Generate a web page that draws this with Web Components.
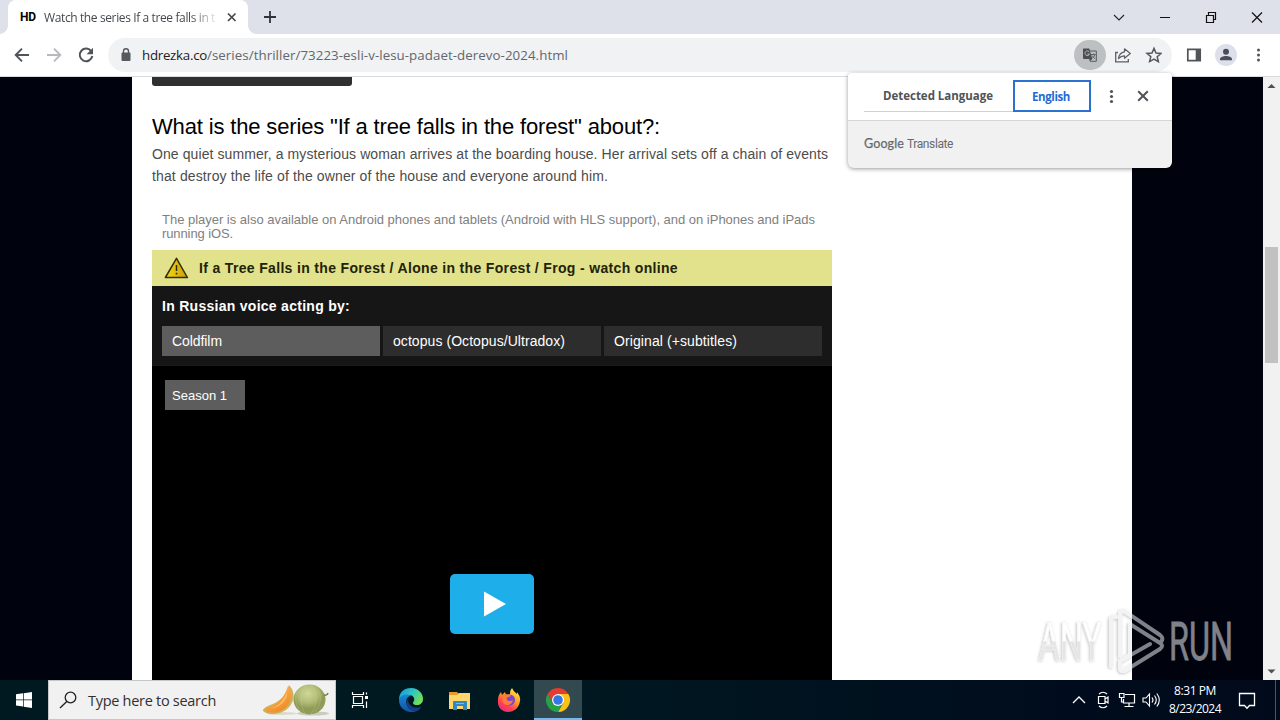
<!DOCTYPE html>
<html lang="en">
<head>
<meta charset="utf-8">
<title>Watch the series If a tree falls in the forest</title>
<style>
html,body{margin:0;height:100%;overflow:hidden}
body{font-family:"Liberation Sans",Arial,sans-serif}
</style>
</head>
<body>
<desktop-screen></desktop-screen>
<script>
const define=(name,css,html)=>{
  const t=document.createElement('template');
  t.innerHTML=`<style>*{box-sizing:border-box}svg{display:block;flex:none}${css}</style>${html}`;
  customElements.define(name,class extends HTMLElement{
    constructor(){super();this.attachShadow({mode:'open'}).append(t.content.cloneNode(true));}
  });
};

/* One line of text whose tracking is adjusted to fill the given width. */
customElements.define('fit-text',class extends HTMLElement{
  constructor(){
    super();
    this.attachShadow({mode:'open'}).innerHTML='<style>:host{display:block;white-space:pre;width:max-content}span{display:inline-block}</style><span><slot></slot></span>';
  }
  connectedCallback(){
    const s=this.shadowRoot.querySelector('span'),w=+this.getAttribute('w');
    const n=this.textContent.length;
    const natural=s.getBoundingClientRect().width;
    if(w&&n&&natural){s.style.letterSpacing=((w-natural)/n)+'px';this.style.width=w+'px';}
  }
});

define('browser-tab',`
:host{display:flex;width:240px;height:34px;background:#fff;border-radius:8px 8px 0 0;align-items:center;padding:0 8px 0 12px;font:12px "Open Sans","Noto Sans",sans-serif;color:#45494d;position:relative}
:host::before,:host::after{content:"";position:absolute;bottom:0;width:8px;height:8px}
:host::before{left:-8px;background:radial-gradient(circle at 0 0,transparent 7.5px,#fff 8px)}
:host::after{right:-8px;background:radial-gradient(circle at 100% 0,transparent 7.5px,#fff 8px)}
.ico{font:bold 12px Roboto,sans-serif;color:#000;width:24px}
.t{width:172px;-webkit-mask-image:linear-gradient(90deg,#000 146px,transparent 175px);mask-image:linear-gradient(90deg,#000 146px,transparent 175px)}
svg{margin-left:7px}`,
`<div class="ico"><fit-text w="16">HD</fit-text></div><div class="t"><fit-text w="171">Watch the series If a tree falls in t</fit-text></div>
<svg width="16" height="16" viewBox="0 0 16 16"><path d="M5 4.500l7.500 7.500M12.500 4.500L5 12" stroke="#45494d" stroke-width="1.700"/></svg>`);

define('tab-strip',`
:host{display:flex;height:34px;background:#dee1e9;padding-left:8px;align-items:center}
.plus{margin-left:14px}.win{display:flex;margin-left:auto}`,
`<browser-tab></browser-tab>
<svg class="plus" width="16" height="16" viewBox="0 0 16 16"><path d="M8 2v12M2 8h12" stroke="#303338" stroke-width="1.800"/></svg>
<div class="win">
<svg width="46" height="28" viewBox="0 0 46 28"><path d="M18 12l5 5 5-5" fill="none" stroke="#222" stroke-width="1.100"/></svg>
<svg width="46" height="28" viewBox="0 0 46 28"><path d="M18 14.500h10" stroke="#111"/></svg>
<svg width="46" height="28" viewBox="0 0 46 28"><path d="M18.500 12.500h7v7h-7zM20.500 12v-2.500h7v7H26" fill="none" stroke="#111" stroke-width="1.200"/></svg>
<svg width="46" height="28" viewBox="0 0 46 28"><path d="M18 9.500l10 10M28 9.500l-10 10" stroke="#111" stroke-width="1.200"/></svg>
</div>`);

define('tool-bar',`
:host{display:flex;height:43px;background:#fff;border-bottom:1px solid #d9dbdd;align-items:center;padding-left:12px}
.nav{display:flex;gap:12px;width:96px}
.omni{display:flex;align-items:center;width:1064px;height:34px;border-radius:17px;background:#f0f2f4;padding:0 10px 0 11px;font:13.3px "Open Sans","Noto Sans",sans-serif;color:#62676d}
.host{color:#1d2024;margin-left:9px}
.tr{margin-left:auto;width:32px;height:30px;border-radius:16px;background:#bcc0c1;display:flex;align-items:center;justify-content:center}
.icons{display:flex;gap:12px;margin-left:8px;align-items:center}
.right{display:flex;align-items:center;margin-left:12px;width:84px}`,
`<div class="nav">
<svg width="20" height="20" viewBox="0 0 20 20"><path d="M17 10H4M10 3.700L3.700 10l6.300 6.300" fill="none" stroke="#505459" stroke-width="1.900"/></svg>
<svg width="20" height="20" viewBox="0 0 20 20"><path d="M3 10h13M10 3.700l6.300 6.300-6.300 6.300" fill="none" stroke="#b7b9bc" stroke-width="1.900"/></svg>
<svg width="20" height="20" viewBox="0 0 20 20"><path d="M15.400 6.500A6.300 6.300 0 1 0 16.300 11" fill="none" stroke="#505459" stroke-width="2"/><path d="M17 2.800v6.400h-6.400z" fill="#505459"/></svg>
</div>
<div class="omni">
<svg width="14" height="16" viewBox="0 0 14 16"><rect x="2.500" y="5.500" width="9" height="8.500" rx="1" fill="#55595e"/><path d="M4.500 6V4.200a2.500 2.500 0 0 1 5 0V6" fill="none" stroke="#55595e" stroke-width="1.400"/></svg>
<fit-text class="host" w="65">hdrezka.co</fit-text><fit-text w="361">/series/thriller/73223-esli-v-lesu-padaet-derevo-2024.html</fit-text>
<div class="tr"><svg width="16" height="16" viewBox="0 0 16 16"><path d="M7 4h7.300v10.300H8.200" fill="none" stroke="#55595c"/><path d="M1 1.500h6.300l3 10.500H2a1 1 0 0 1-1-1z" fill="#4b4f52"/><path d="M7.300 5.100A2.300 2.300 0 1 0 7.500 7H5.400" fill="none" stroke="#bcc0c1" stroke-width=".9"/><path d="M9 7.500h4.600M11.400 6.500v1M12.800 7.800c-.4 1.500-1.400 2.600-2.500 3.500M10 8.500l3 3.400" fill="none" stroke="#55595c" stroke-width=".9"/><path d="M7.300 12h3l-2.600 2.600z" fill="#4b4f52"/></svg></div>
<div class="icons">
<svg width="18" height="18" viewBox="0 0 18 18"><path d="M4 6.500H1.700v9.300h12.600V13" fill="none" stroke="#5b6066" stroke-width="1.300"/><path d="M10.500 2.800L16.300 7.500l-5.800 4.800V9.800C8 9.700 6.300 10.500 4.500 12.600c.4-3.500 2.500-6.300 6-6.800z" fill="none" stroke="#5b6066" stroke-width="1.200" stroke-linejoin="round"/></svg>
<svg width="18" height="18" viewBox="0 0 18 18"><path d="M10 2.400l2 4.600 5 .45-3.800 3.300 1.150 4.900L10 13l-4.350 2.550 1.150-4.900L3 7.450 8 7z" fill="none" stroke="#55595e" stroke-width="1.500" stroke-linejoin="miter"/></svg>
</div></div>
<div class="right">
<svg width="20" height="20" viewBox="0 0 20 20"><path d="M3.800 4.300h12.400v11.400H3.800z" fill="none" stroke="#505459" stroke-width="1.700"/><path d="M11.700 4h4.700v12h-4.700z" fill="#505459"/></svg>
<svg style="margin-left:11px" width="22" height="22" viewBox="0 0 22 22"><circle cx="11" cy="11" r="11" fill="#dde0ea"/><circle cx="11" cy="7.800" r="3" fill="#494e5c"/><path d="M5 16.300v-1.200c0-2 3.500-3.100 6-3.100s6 1.100 6 3.100v1.200z" fill="#494e5c"/></svg>
<svg style="margin-left:12px" width="18" height="18" viewBox="0 0 18 18"><g fill="#505459"><circle cx="9.500" cy="4" r="1.500"/><circle cx="9.500" cy="9" r="1.500"/><circle cx="9.500" cy="14" r="1.500"/></g></svg>
</div>`);

define('translate-popup',`
:host{display:block;width:324px;height:95px;background:#f1f1f1;border-radius:4px 4px 6px 6px;box-shadow:0 1px 4px rgba(0,0,0,.4);overflow:hidden}
.top{display:flex;height:48px;background:#fff;border-bottom:1px solid #d6d6d6;padding-left:16px;font:bold 11.5px "Open Sans","Noto Sans",sans-serif}
.a{width:149px;height:39px;border-bottom:1px solid #d0d0d0;display:flex;align-items:center;color:#505357;padding:7px 0 0 19px}
.b{width:78px;height:32px;margin-top:7px;border:2px solid #2972d2;display:flex;align-items:center;justify-content:center;color:#1f6bd5;padding:0 2px 0 0}
.ft{display:flex;padding:15px 0 0 16px;color:#666a6e;font-size:12px;line-height:16px}
.g{font-family:Lato,sans-serif;-webkit-text-stroke:.25px #666a6e;margin-right:3px;font-size:12.500px}
.t{font-family:Roboto,sans-serif}
svg{margin-top:14px}`,
`<div class="top"><div class="a"><fit-text w="110">Detected Language</fit-text></div><div class="b"><fit-text w="38">English</fit-text></div>
<svg style="margin-left:12px" width="18" height="18" viewBox="0 0 18 18"><g fill="#505459"><circle cx="8.500" cy="4.500" r="1.600"/><circle cx="8.500" cy="9.500" r="1.600"/><circle cx="8.500" cy="14.500" r="1.600"/></g></svg>
<svg style="margin-left:13px" width="18" height="18" viewBox="0 0 18 18"><path d="M4.200 4.200l9.600 9.600M13.800 4.200l-9.600 9.600" stroke="#505459" stroke-width="2"/></svg></div>
<div class="ft"><fit-text class="g" w="40">Google</fit-text><fit-text class="t" w="46">Translate</fit-text></div>`);

define('voice-option',`
:host{display:flex;align-items:center;height:30px;width:218px;padding-left:10px;background:#2d2d2d;color:#fff;font-size:14px;box-sizing:border-box}
:host([active]){background:#5d5d5d}`,`<slot></slot>`);

define('play-button',`
:host{display:flex;width:84px;height:60px;border-radius:5px;background:#1eaeea;align-items:center;justify-content:center}`,
`<svg width="84" height="60" viewBox="0 0 84 60"><path d="M34 17.500v25L56 30z" fill="#fff"/></svg>`);

define('video-player',`
:host{display:flex;flex-direction:column;width:680px;height:430px;background:#000}
.warn{display:flex;height:36px;flex:none;background:#e1e28b;align-items:center;padding-left:12px;font-weight:bold;font-size:14px;color:#222208;gap:10px}
.voices{height:80px;flex:none;background:#161616;padding:0 10px;color:#fff;border-bottom:1px solid #1a1a1a}
.voices h3{margin:0;font-size:14px;height:40px;line-height:40px}
.row{display:flex;gap:3px}
.season{width:80px;height:30px;margin:14px 0 0 13px;padding-left:7px;font-size:13px}
play-button{margin:164px 0 0 298px}`,
`<div class="warn"><svg width="25" height="24" viewBox="0 0 25 24"><defs><linearGradient id="w" x2="1"><stop offset="0" stop-color="#f4da16"/><stop offset="1" stop-color="#c99d0b"/></linearGradient></defs><path d="M12.500 2.400L23.400 21.500H1.400z" fill="url(#w)" stroke="#352d0b" stroke-width="1.500" stroke-linejoin="round"/><path d="M12.500 9v6M12.500 16.700v1.800" stroke="#30280a" stroke-width="1.500"/></svg><fit-text w="479">If a Tree Falls in the Forest / Alone in the Forest / Frog - watch online</fit-text></div>
<div class="voices"><h3><fit-text w="188">In Russian voice acting by:</fit-text></h3><div class="row">
<voice-option active><fit-text w="50">Coldfilm</fit-text></voice-option><voice-option><fit-text w="172">octopus (Octopus/Ultradox)</fit-text></voice-option><voice-option><fit-text w="123">Original (+subtitles)</fit-text></voice-option></div></div>
<voice-option class="season" active><fit-text w="55">Season 1</fit-text></voice-option>
<play-button></play-button>`);

define('series-page',`
:host{display:block;width:1000px;height:603px;background:#fff;padding:0 20px;overflow:hidden;box-sizing:border-box}
.bar{width:200px;height:9px;background:#303030;border-radius:0 0 3px 3px}
h2{margin:28px 0 0;font-weight:normal;font-size:22px;line-height:26px;color:#000}
.p{margin-top:3px;font-size:14px;line-height:22px;color:#4c4c4c}
.note{margin:26px 0 9px;padding-left:10px;font-size:13px;line-height:14px;color:#808080}`,
`<div class="bar"></div><h2><fit-text w="508">What is the series "If a tree falls in the forest" about?:</fit-text></h2>
<div class="p"><fit-text w="676">One quiet summer, a mysterious woman arrives at the boarding house. Her arrival sets off a chain of events</fit-text><fit-text w="456">that destroy the life of the owner of the house and everyone around him.</fit-text></div>
<div class="note"><fit-text w="653">The player is also available on Android phones and tablets (Android with HLS support), and on iPhones and iPads</fit-text><fit-text w="71">running iOS.</fit-text></div>
<video-player></video-player>`);

define('scroll-bar',`
:host{display:flex;flex-direction:column;align-items:center;width:17px;height:603px;background:#f1f1f1;justify-content:space-between}
.track{flex:1;padding-top:153px}.thumb{width:13px;height:116px;background:#c1c1c1}`,
`<svg width="17" height="17" viewBox="0 0 17 17"><path d="M4.500 11L8.500 7l4 4z" fill="#505050"/></svg><div class="track"><div class="thumb"></div></div><svg width="17" height="17" viewBox="0 0 17 17"><path d="M4.500 6.500l4 4 4-4z" fill="#505050"/></svg>`);

define('water-mark',`:host{display:block;pointer-events:none}text{font-family:Roboto,sans-serif;font-weight:400}svg{overflow:visible}`,
`<svg width="206" height="70" viewBox="0 0 206 70">
<defs><filter id="s" x="-10%" y="-10%" width="120%" height="130%"><feDropShadow dx="-1" dy="1" stdDeviation="1.800" flood-color="#000" flood-opacity=".24"/></filter>
<clipPath id="l"><path d="M-9-9H102V79H-9z"/></clipPath><clipPath id="r"><path d="M102-9H215V79H102z"/></clipPath>
<linearGradient id="g" x2="0" y2="1"><stop offset="0" stop-color="#fff"/><stop offset=".48" stop-color="#fff"/><stop offset=".5" stop-color="#e4e4e4"/><stop offset="1" stop-color="#e8e8e8"/></linearGradient>
<g id="logo" fill="none" stroke-width="4" stroke-linejoin="round" stroke-linecap="round"><path d="M81 61V15q0-4 5-3"/><path d="M90 51V10q0-6 6-3l34 23q4 3 1 7"/><path d="M100 49V19l30 19q4 3 0 6L96 65q-6 3-6-3V56l30-17"/></g></defs>
<g clip-path="url(#l)"><g filter="url(#s)"><text x="9" y="55" font-size="53" textLength="63" lengthAdjust="spacingAndGlyphs" fill="url(#g)" stroke="#f0f0f0" stroke-width=".6">ANY</text><use href="#logo" stroke="#f3f3f3"/></g></g>
<g clip-path="url(#r)"><use href="#logo" stroke="#80828a"/></g>
<text x="139" y="55" font-size="53" textLength="64" lengthAdjust="spacingAndGlyphs" fill="#80828a" stroke="#80828a" stroke-width=".8">RUN</text></svg>`);

define('search-box',`
:host{display:flex;width:288px;height:40px;background:#f1f1f1;border:1px solid #c4c7c8;align-items:center;padding-left:10px;font:14.500px "Open Sans","Noto Sans",sans-serif;color:#303030;box-sizing:border-box}
fit-text{margin-left:9px}.m{margin-left:46px}`,
`<svg width="20" height="20" viewBox="0 0 20 20"><circle cx="11.500" cy="7.500" r="5.300" fill="none" stroke="#222" stroke-width="1.300"/><path d="M7.800 11.500L1 18" stroke="#222" stroke-width="1.400"/></svg><fit-text w="128">Type here to search</fit-text>
<svg class="m" width="68" height="36" viewBox="0 0 68 36"><defs><radialGradient id="a" cx=".45" cy=".3"><stop stop-color="#d0d79a"/><stop offset=".6" stop-color="#b3bd77"/><stop offset="1" stop-color="#8f9b57"/></radialGradient><linearGradient id="b" x2=".6" y2="1"><stop stop-color="#ffc45e"/><stop offset="1" stop-color="#f18928"/></linearGradient></defs>
<ellipse cx="20" cy="31.500" rx="15" ry="1.500" fill="#dcd9cc"/><ellipse cx="51" cy="31.500" rx="16" ry="2" fill="#cccbbd"/>
<path d="M27 3c6 6 6 15 1 21-6 8-20 11-27 5 0-3 3-4 7-6 10-3 16-10 19-20z" fill="#c9b463"/><path d="M26 4c5 6 4 13 0 19-6 8-17 10-24 5 2-2 5-3 8-4 8-4 13-10 16-20z" fill="url(#b)"/><path d="M25 10c1 8-6 15-17 17 9-3 14-9 17-17z" fill="#ffbd5f"/>
<ellipse cx="47.500" cy="17.500" rx="16" ry="15" fill="url(#a)"/><path d="M43 4c-5 8-5 19 0 28M50 4c6 8 5 20-1 28M35 10c-3 6-1 13 3 19M57 9c3 7 1 15-4 21" fill="none" stroke="#dce0ae" stroke-width=".5" opacity=".45"/><path d="M62 13q3 1 4-2" fill="none" stroke="#69853f" stroke-width="1.600"/></svg>`);

define('task-button',`
:host{display:flex;width:48px;height:40px;align-items:center;justify-content:center;flex:none;box-sizing:border-box}
:host([active]){background:#334950;border-bottom:2px solid #76b9ed;padding-top:2px}`,`<slot></slot>`);

define('system-tray',`
:host{display:flex;align-items:center;margin-left:auto;color:#fff;font:12px "Open Sans","Noto Sans",sans-serif;height:40px}
.clock{display:flex;flex-direction:column;align-items:center;line-height:18px;width:62px;margin:-1px 0 0 1px}
.end{width:17px;height:40px;display:flex;justify-content:flex-end;padding-right:4px}.end i{width:1px;background:#4b5563}`,
`<svg width="24" height="24" viewBox="0 0 24 24"><path d="M6 15l6-6 6 6" fill="none" stroke="#fff" stroke-width="1.300"/></svg>
<svg width="24" height="24" viewBox="0 0 24 24"><path d="M8 6q4-3.500 8 0M8 18q4 3.500 8 0M7.500 8.500h6.500v7H7.500zM14 11l3-2v6l-3-2" fill="none" stroke="#fff" stroke-width="1.200"/></svg>
<svg width="24" height="24" viewBox="0 0 24 24"><path d="M10 6.500h9.500v8.500H8.500v-4M14 15v3M9.500 18.500h9M4.500 5.500h4.500v4H4.500zM6.500 9.500v4.500h2" fill="none" stroke="#fff" stroke-width="1.200"/></svg>
<svg width="24" height="24" viewBox="0 0 24 24"><path d="M4 10h3l3.500-4v12L7 14H4zM13 9.500q2 2.500 0 5M15.500 7.500q3.500 4.500 0 9M17.800 5.500q5 6.500 0 13" fill="none" stroke="#fff" stroke-width="1.100"/></svg>
<div class="clock"><fit-text w="42">8:31 PM</fit-text><fit-text w="52">8/23/2024</fit-text></div>
<svg style="margin-left:5px" width="32" height="24" viewBox="0 0 32 24"><path d="M8.500 5.500h15v12h-5L16 20.300l-2.500-2.800h-5z" fill="none" stroke="#fff" stroke-width="1.300"/></svg>
<div class="end"><i></i></div>`);

define('task-bar',`
:host{display:flex;height:40px;background:linear-gradient(90deg,#00181f,#001821 45%,#000c1d 85%,#000a1b)}
.gap{margin-left:1px}.sp{margin-left:3px}`,
`<task-button><svg width="16" height="16" viewBox="0 0 16 16"><path d="M0 2.300l7-1v6.200H0zM7.700 1.200L16 0v7.500H7.700zM0 8.300h7v6.300l-7-1zM7.700 8.300H16V16l-8.300-1.200z" fill="#fff"/></svg></task-button>
<search-box></search-box>
<task-button><svg width="18" height="18" viewBox="0 0 18 18"><path d="M2.500 5.500h9v7h-9zM1.500 1v2.500h11V1M1.500 17v-2.500h11V17M15.500 1.500v2M15.500 10.500V17" fill="none" stroke="#fff" stroke-width="1.200"/><path d="M14 5h3v3h-3z" fill="#fff"/></svg></task-button>
<task-button class="sp"><svg width="26" height="26" viewBox="0 0 26 26"><defs><linearGradient id="e" x2="1" y2=".5"><stop stop-color="#1594d8"/><stop offset=".55" stop-color="#2fc5c4"/><stop offset="1" stop-color="#70df59"/></linearGradient><linearGradient id="f" x2="0" y2="1"><stop stop-color="#1589d8"/><stop offset="1" stop-color="#1450a4"/></linearGradient></defs><path d="M1 13C1 5 6 1 13 1c8 0 12 6 12 11 0 4-3 6-6 6-4 0-5-2-3-4 1-3-1-6-5-6-5 0-9 2-10 5z" fill="url(#e)"/><path d="M1 13c1-5 8-7 12-4-6 0-7 11 1 13 4 1 7-1 9-2-3 5-8 5-11 5C5 24 1 19 1 13z" fill="url(#f)"/><path d="M10 12c-4 6 1 13 8 12 2-1 4-2 5-4-5 2-13 0-13-8z" fill="#123f81"/></svg></task-button>
<task-button class="gap"><svg width="24" height="24" viewBox="0 0 24 24"><path d="M1 4h8l2 2h11v4H1z" fill="#e99b25"/><path d="M1 7h8l2-2h11v16H1z" fill="#ffd66b"/><path d="M5 22v-8q0-1 1-1h12q1 0 1 1v8h-4v-4H9v4z" fill="#3286c2"/><path d="M8 15h8v1H8z" fill="#70bce5"/></svg></task-button>
<task-button class="gap"><svg width="26" height="26" viewBox="0 0 26 26"><defs><linearGradient id="ff" x1=".8" x2=".2" y2="1"><stop stop-color="#fff34e"/><stop offset=".42" stop-color="#ff9a24"/><stop offset=".72" stop-color="#ff4050"/><stop offset="1" stop-color="#e52a87"/></linearGradient></defs><path d="M5 5l1 3 3-3 1 3 4-1q0-4 2-6 1 3 5 6V5q4 5 3 9c-1 7-6 11-12 11S1 20 2 13q0-5 3-8z" fill="url(#ff)"/><circle cx="13.500" cy="13" r="5.500" fill="#7945d7"/><path d="M7 8q5-2 8 1l-4 1.500q-1 2.500 2 3.500 3 0 4-1-1 5-6 5c-4 0-6-4-4-10z" fill="#ff7a38"/></svg></task-button>
<task-button class="gap" active><svg width="26" height="26" viewBox="0 0 26 26"><path d="M13 7h10.400A12 12 0 0 1 13 25l5.200-9z" fill="#fbc116"/><path d="M2.600 7l5.200 9 5.200 3 3.500-1L13 25A12 12 0 0 1 2.600 7z" fill="#26a148"/><path d="M2.600 7A12 12 0 0 1 23.400 7H13a6 6 0 0 0-5.200 9z" fill="#e63c2f"/><circle cx="13" cy="13" r="6" fill="#fff"/><circle cx="13" cy="13" r="4.800" fill="#3477e7"/></svg></task-button>
<system-tray></system-tray>`);

define('desktop-screen',`
:host{display:flex;flex-direction:column;width:1280px;height:720px;position:relative;overflow:hidden;background:#00030d}
.view{display:flex;height:603px;padding-left:132px;justify-content:space-between}
translate-popup{position:absolute;left:848px;top:73px}water-mark{position:absolute;left:1030px;top:605px}`,
`<tab-strip></tab-strip><tool-bar></tool-bar><div class="view"><series-page></series-page><scroll-bar></scroll-bar></div><task-bar></task-bar><translate-popup></translate-popup><water-mark></water-mark>`);
</script>
</body>
</html>
